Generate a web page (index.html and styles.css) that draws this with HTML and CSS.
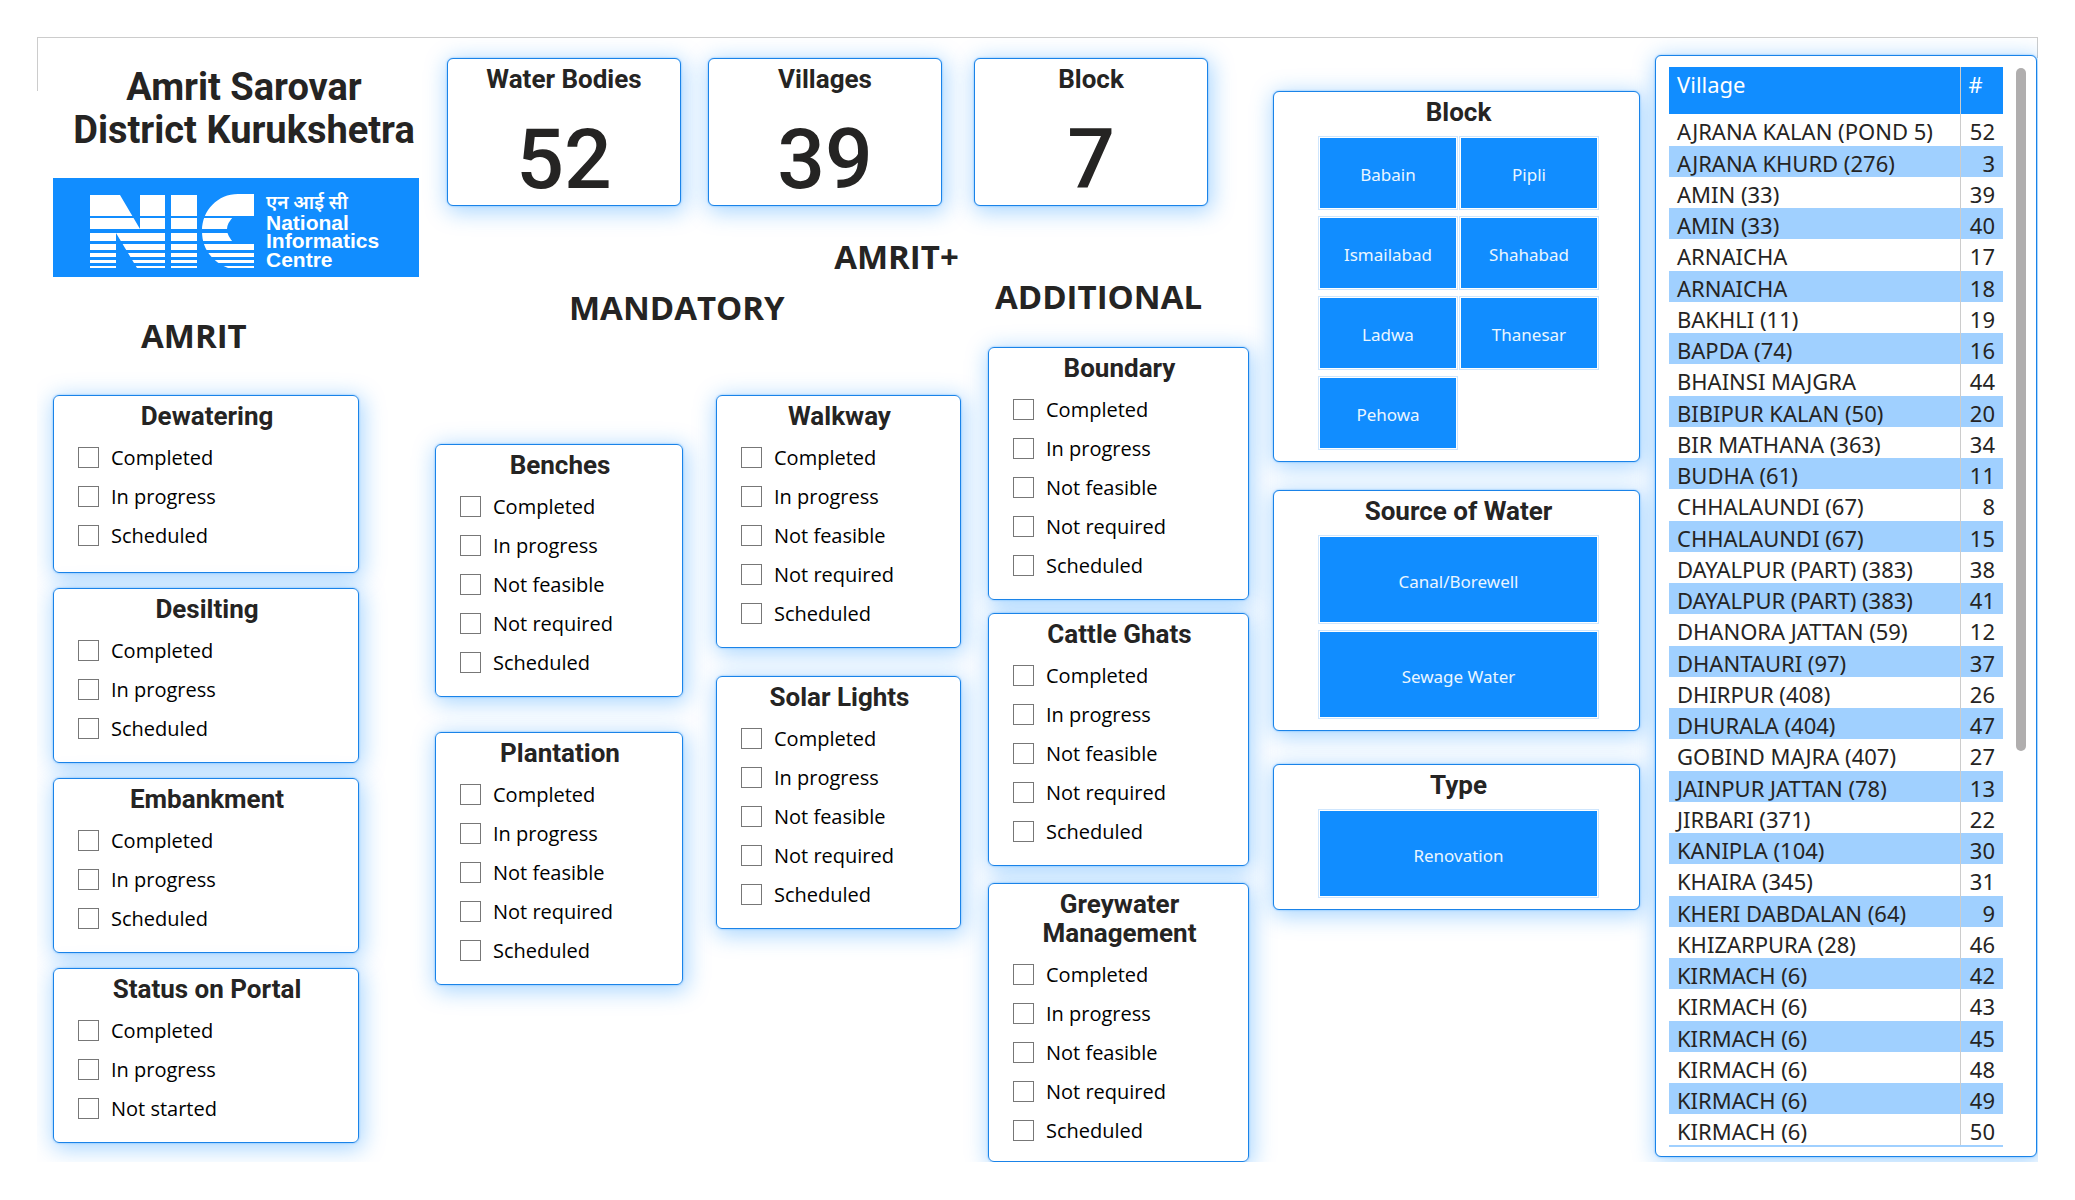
FILE: index.html
```html
<!DOCTYPE html>
<html lang="en">
<head>
<meta charset="utf-8">
<title>Amrit Sarovar - District Kurukshetra</title>
<link rel="stylesheet" href="styles.css">
</head>
<body>
<main class="report">

  <section class="overview">
    <h1 class="report-title">Amrit Sarovar<br>District Kurukshetra</h1>
    <svg class="logo" viewBox="0 0 366 99" role="img" aria-label="National Informatics Centre">
      <rect width="366" height="99" fill="#118dff"/>
      <g fill="#fff">
        <path d="M37 17H67L87 51V17H112V90H84L63 55V90H37Z"/>
        <path d="M118 17H144V90H118Z"/>
        <path d="M201 16H185C165 16 149 32 149 53C149 72 160 84 175 90H201V65H181Q174 58 174 51Q174 45 181 38H201Z"/>
      </g>
      <g fill="#118dff">
        <rect x="30" y="38" width="175" height="2"/>
        <rect x="30" y="51" width="175" height="4"/>
        <rect x="30" y="63" width="175" height="3"/>
        <rect x="30" y="72" width="175" height="3"/>
        <rect x="30" y="79" width="175" height="3"/>
        <rect x="30" y="85" width="175" height="3"/>
      </g>
      <g class="logo-text">
        <text x="213" y="31" class="logo-hindi" lang="hi">एन आई सी</text>
        <text x="213" y="52">National</text>
        <text x="213" y="70">Informatics</text>
        <text x="213" y="89">Centre</text>
      </g>
    </svg>
    <h2 class="group-title group-amrit">AMRIT</h2>
    <div class="stack stack-amrit">
      <fieldset class="card filter filter-roomy">
        <legend>Dewatering</legend>
        <label><input type="checkbox">Completed</label>
        <label><input type="checkbox">In progress</label>
        <label><input type="checkbox">Scheduled</label>
      </fieldset>
      <fieldset class="card filter">
        <legend>Desilting</legend>
        <label><input type="checkbox">Completed</label>
        <label><input type="checkbox">In progress</label>
        <label><input type="checkbox">Scheduled</label>
      </fieldset>
      <fieldset class="card filter">
        <legend>Embankment</legend>
        <label><input type="checkbox">Completed</label>
        <label><input type="checkbox">In progress</label>
        <label><input type="checkbox">Scheduled</label>
      </fieldset>
      <fieldset class="card filter">
        <legend>Status on Portal</legend>
        <label><input type="checkbox">Completed</label>
        <label><input type="checkbox">In progress</label>
        <label><input type="checkbox">Not started</label>
      </fieldset>
    </div>
  </section>

  <section class="centre">
    <div class="stats">
      <div class="card stat"><h3>Water Bodies</h3><p>52</p></div>
      <div class="card stat"><h3>Villages</h3><p>39</p></div>
      <div class="card stat"><h3>Block</h3><p>7</p></div>
    </div>
    <h2 class="group-title group-plus">AMRIT+</h2>
    <div class="groups">
      <section class="mandatory">
        <h2 class="group-title">MANDATORY</h2>
        <div class="mandatory-columns">
          <div class="stack stack-low">
            <fieldset class="card filter">
              <legend>Benches</legend>
              <label><input type="checkbox">Completed</label>
              <label><input type="checkbox">In progress</label>
              <label><input type="checkbox">Not feasible</label>
              <label><input type="checkbox">Not required</label>
              <label><input type="checkbox">Scheduled</label>
            </fieldset>
            <fieldset class="card filter">
              <legend>Plantation</legend>
              <label><input type="checkbox">Completed</label>
              <label><input type="checkbox">In progress</label>
              <label><input type="checkbox">Not feasible</label>
              <label><input type="checkbox">Not required</label>
              <label><input type="checkbox">Scheduled</label>
            </fieldset>
          </div>
          <div class="stack stack-high">
            <fieldset class="card filter">
              <legend>Walkway</legend>
              <label><input type="checkbox">Completed</label>
              <label><input type="checkbox">In progress</label>
              <label><input type="checkbox">Not feasible</label>
              <label><input type="checkbox">Not required</label>
              <label><input type="checkbox">Scheduled</label>
            </fieldset>
            <fieldset class="card filter">
              <legend>Solar Lights</legend>
              <label><input type="checkbox">Completed</label>
              <label><input type="checkbox">In progress</label>
              <label><input type="checkbox">Not feasible</label>
              <label><input type="checkbox">Not required</label>
              <label><input type="checkbox">Scheduled</label>
            </fieldset>
          </div>
        </div>
      </section>
      <section class="additional">
        <h2 class="group-title">ADDITIONAL</h2>
        <div class="stack stack-additional">
          <fieldset class="card filter">
            <legend>Boundary</legend>
            <label><input type="checkbox">Completed</label>
            <label><input type="checkbox">In progress</label>
            <label><input type="checkbox">Not feasible</label>
            <label><input type="checkbox">Not required</label>
            <label><input type="checkbox">Scheduled</label>
          </fieldset>
          <fieldset class="card filter">
            <legend>Cattle Ghats</legend>
            <label><input type="checkbox">Completed</label>
            <label><input type="checkbox">In progress</label>
            <label><input type="checkbox">Not feasible</label>
            <label><input type="checkbox">Not required</label>
            <label><input type="checkbox">Scheduled</label>
          </fieldset>
          <fieldset class="card filter filter-greywater">
            <legend>Greywater<br>Management</legend>
            <label><input type="checkbox">Completed</label>
            <label><input type="checkbox">In progress</label>
            <label><input type="checkbox">Not feasible</label>
            <label><input type="checkbox">Not required</label>
            <label><input type="checkbox">Scheduled</label>
          </fieldset>
        </div>
      </section>
    </div>
  </section>

  <section class="slicers">
    <div class="card slicer">
      <h3>Block</h3>
      <div class="tiles tiles-block">
        <button type="button">Babain</button>
        <button type="button">Pipli</button>
        <button type="button">Ismailabad</button>
        <button type="button">Shahabad</button>
        <button type="button">Ladwa</button>
        <button type="button">Thanesar</button>
        <button type="button">Pehowa</button>
      </div>
    </div>
    <div class="card slicer">
      <h3>Source of Water</h3>
      <div class="tiles tiles-wide">
        <button type="button">Canal/Borewell</button>
        <button type="button">Sewage Water</button>
      </div>
    </div>
    <div class="card slicer slicer-type">
      <h3>Type</h3>
      <div class="tiles tiles-wide">
        <button type="button">Renovation</button>
      </div>
    </div>
  </section>

  <section class="card village-card">
    <table class="villages">
      <thead><tr><th scope="col">Village</th><th scope="col">#</th></tr></thead>
      <tbody>
        <tr><td>AJRANA KALAN (POND 5)</td><td>52</td></tr>
        <tr><td>AJRANA KHURD (276)</td><td>3</td></tr>
        <tr><td>AMIN (33)</td><td>39</td></tr>
        <tr><td>AMIN (33)</td><td>40</td></tr>
        <tr><td>ARNAICHA</td><td>17</td></tr>
        <tr><td>ARNAICHA</td><td>18</td></tr>
        <tr><td>BAKHLI (11)</td><td>19</td></tr>
        <tr><td>BAPDA (74)</td><td>16</td></tr>
        <tr><td>BHAINSI MAJGRA</td><td>44</td></tr>
        <tr><td>BIBIPUR KALAN (50)</td><td>20</td></tr>
        <tr><td>BIR MATHANA (363)</td><td>34</td></tr>
        <tr><td>BUDHA (61)</td><td>11</td></tr>
        <tr><td>CHHALAUNDI (67)</td><td>8</td></tr>
        <tr><td>CHHALAUNDI (67)</td><td>15</td></tr>
        <tr><td>DAYALPUR (PART) (383)</td><td>38</td></tr>
        <tr><td>DAYALPUR (PART) (383)</td><td>41</td></tr>
        <tr><td>DHANORA JATTAN (59)</td><td>12</td></tr>
        <tr><td>DHANTAURI (97)</td><td>37</td></tr>
        <tr><td>DHIRPUR (408)</td><td>26</td></tr>
        <tr><td>DHURALA (404)</td><td>47</td></tr>
        <tr><td>GOBIND MAJRA (407)</td><td>27</td></tr>
        <tr><td>JAINPUR JATTAN (78)</td><td>13</td></tr>
        <tr><td>JIRBARI (371)</td><td>22</td></tr>
        <tr><td>KANIPLA (104)</td><td>30</td></tr>
        <tr><td>KHAIRA (345)</td><td>31</td></tr>
        <tr><td>KHERI DABDALAN (64)</td><td>9</td></tr>
        <tr><td>KHIZARPURA (28)</td><td>46</td></tr>
        <tr><td>KIRMACH (6)</td><td>42</td></tr>
        <tr><td>KIRMACH (6)</td><td>43</td></tr>
        <tr><td>KIRMACH (6)</td><td>45</td></tr>
        <tr><td>KIRMACH (6)</td><td>48</td></tr>
        <tr><td>KIRMACH (6)</td><td>49</td></tr>
        <tr><td>KIRMACH (6)</td><td>50</td></tr>
      </tbody>
    </table>
    <div class="scroll-thumb"></div>
  </section>

</main>
</body>
</html>
```
FILE: styles.css
```css
:root {
  --blue: #118dff;
  --ink: #252423;
  --line: #cccccc;
}

* {
  box-sizing: border-box;
}

body {
  margin: 0;
  background: #fff;
  color: var(--ink);
  font-family: "Open Sans", "Noto Sans", sans-serif;
}

h1, h2, h3, p {
  margin: 0;
}

.report {
  display: grid;
  grid-template-columns: 366fr 824fr 367fr 382fr;
  column-gap: 15px;
  align-items: start;
  margin: 37px;
  padding: 0 1px 0 16px;
  border-top: 1px solid var(--line);
  background:
    linear-gradient(var(--line), var(--line)) 0 0 / 1px 53px no-repeat,
    linear-gradient(var(--line), var(--line)) 100% 0 / 1px 20px no-repeat;
  overflow: hidden;
}

.card {
  border: 1px solid #1a83e8;
  border-radius: 6px;
  background: #fff;
  box-shadow: 2px 4px 22px 2px rgba(17, 141, 255, 0.36), 0 0 2px rgba(17, 141, 255, 0.6);
}

.card h3,
.card legend {
  font: 700 26px/29px Roboto, sans-serif;
  text-align: center;
}

.group-title {
  font-size: 33px;
  font-weight: 700;
  line-height: 40px;
}

.stack {
  display: flex;
  flex-direction: column;
}

/* Title, logo and AMRIT filters */
.report-title {
  margin: 28px 0 26px;
  padding-left: 16px;
  font: 700 38px/43px Roboto, sans-serif;
  text-align: center;
}

.logo {
  display: block;
  width: 100%;
}

.logo-text {
  fill: #fff;
  font: 700 21px "Liberation Sans", sans-serif;
}

.logo-hindi {
  font: 600 19px "Noto Sans Devanagari", "Noto Sans", sans-serif;
}

.group-amrit {
  margin: 39px 0;
  padding-left: 88px;
}

.stack-amrit {
  gap: 15px;
  margin-right: 60px;
}

/* Check-box filters */
.filter {
  min-width: 0;
  margin: 0;
  padding: 6px 8px 14px 24px;
}

.filter-roomy {
  padding-bottom: 17px;
}

.filter-greywater {
  margin-top: 4px;
  padding-bottom: 11px;
}

.filter legend {
  float: left;
  width: 100%;
  margin-bottom: 7px;
  padding: 0 14px 0 0;
}

.filter label {
  display: flex;
  clear: both;
  align-items: center;
  gap: 12px;
  height: 39px;
  color: #000;
  font-size: 20px;
}

.filter input {
  width: 21px;
  height: 21px;
  margin: 0;
  border: 1px solid #777;
  background: #fff;
  appearance: none;
}

.filter input:checked {
  background: var(--ink);
}

/* Figures and the AMRIT+ groups */
.stats {
  display: flex;
  gap: 27px;
  margin-top: 20px;
  padding: 0 50px 0 13px;
}

.stat {
  flex: 1;
  padding: 6px 0 3px;
  text-align: center;
}

.stat:last-child {
  margin-left: 5px;
}

.stat p {
  margin-top: 24px;
  font: 500 84px/84px Roboto, sans-serif;
}

.group-plus {
  margin-top: 31px;
  padding-left: 101px;
  text-align: center;
}

.groups {
  display: grid;
  grid-template-columns: 527fr 261fr;
  column-gap: 27px;
  align-items: start;
  padding-right: 9px;
}

.mandatory {
  padding: 11px 0 0 1px;
}

.mandatory .group-title {
  padding-left: 134px;
}

.mandatory-columns {
  display: grid;
  grid-template-columns: 248fr 245fr;
  column-gap: 33px;
}

.additional .group-title {
  padding-left: 7px;
}

.stack-low {
  gap: 35px;
  padding-top: 116px;
}

.stack-high {
  gap: 28px;
  padding-top: 67px;
}

.stack-additional {
  gap: 13px;
  padding-top: 30px;
}

/* Tile slicers */
.slicers {
  display: flex;
  flex-direction: column;
  gap: 28px;
  padding-top: 53px;
}

.slicer {
  padding: 6px 42px 13px 46px;
}

.slicer h3 {
  margin-bottom: 11px;
}

.slicer-type {
  margin-top: 5px;
}

.tiles {
  display: grid;
  gap: 10px 5px;
}

.tiles-block {
  grid-template-columns: 1fr 1fr;
  grid-auto-rows: 70px;
}

.tiles-wide {
  grid-auto-rows: 85px;
}

.tiles button {
  padding: 3px 0 0;
  border: 0;
  background: var(--blue);
  box-shadow: 0 0 0 1px #fff, 0 0 0 2px #cfe6fd;
  color: #eaf6ff;
  font: 17px "Noto Sans", sans-serif;
}

/* Village list */
.village-card {
  display: flex;
  justify-content: space-between;
  margin-top: 17px;
  padding: 11px 10px 9px 13px;
}

.villages {
  flex: 0 1 334px;
  border-collapse: collapse;
  border-bottom: 2px solid #a0d0ff;
  font-family: "Noto Sans", sans-serif;
  font-size: 22px;
  line-height: 28px;
}

.villages th {
  height: 47px;
  padding: 3px 8px 0;
  background: var(--blue);
  color: #fff;
  font-weight: 400;
  text-align: left;
  vertical-align: top;
}

.villages td {
  height: 31px;
  padding: 2px 8px 0;
  white-space: nowrap;
}

.villages tbody tr:nth-child(4n + 1) td {
  height: 32px;
}

.villages tbody tr:nth-child(even) {
  background: #a0d0ff;
}

.villages th + th,
.villages td + td {
  width: 43px;
  border-left: 1px solid var(--line);
}

.villages td + td {
  text-align: right;
}

.scroll-thumb {
  width: 10px;
  height: 683px;
  margin-top: 1px;
  border-radius: 5px;
  background: #b0aeae;
}
```
